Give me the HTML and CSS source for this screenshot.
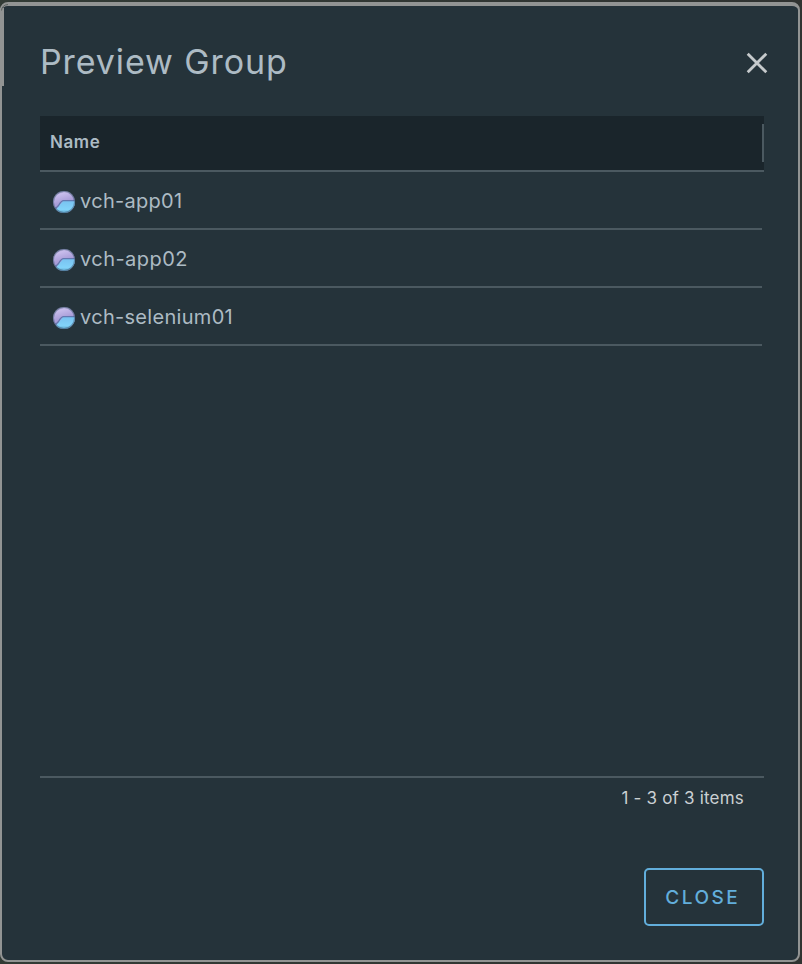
FILE: index.html
```html
<!DOCTYPE html>
<html lang="en">
<head>
<meta charset="utf-8">
<title>Preview Group</title>
<link rel="stylesheet" href="styles.css">
</head>
<body>
<svg class="defs" width="0" height="0" aria-hidden="true">
  <defs>
    <linearGradient id="top" x1="0" y1="0" x2="0.3" y2="1">
      <stop offset="0" stop-color="#8a80b5"/><stop offset=".25" stop-color="#c8bdec"/><stop offset=".6" stop-color="#a99dd8"/>
    </linearGradient>
    <linearGradient id="bottom" x1="0" y1="0" x2="0" y2="1">
      <stop offset="0" stop-color="#79c2f0"/><stop offset=".65" stop-color="#82d3fa"/><stop offset="1" stop-color="#569fc4"/>
    </linearGradient>
    <clipPath id="disc"><circle cx="12" cy="12" r="11"/></clipPath>
    <symbol id="vch" viewBox="0 0 24 24">
      <g clip-path="url(#disc)">
        <rect width="24" height="24" fill="url(#top)"/>
        <path d="M4 19.500 11 11H24V24H4Z" fill="url(#bottom)"/>
        <path d="M3.500 18.500 6.500 15.500Q9.500 10.700 11.500 10.700H24" fill="none" stroke="#6478b0" stroke-width="1.300"/>
      </g>
      <circle cx="12" cy="12" r="10.600" fill="none" stroke="#3c5670" stroke-opacity=".5" stroke-width="1.200"/>
    </symbol>
  </defs>
</svg>
<div class="modal" role="dialog" aria-labelledby="title">
  <div class="edge"></div>
  <svg class="corner" viewBox="0 0 10 10" aria-hidden="true"><path d="M1.500 8.500Q2 3 8 2.500"/></svg>
  <header class="header">
    <h1 id="title" class="title">Preview Group</h1>
    <svg class="dismiss" viewBox="0 0 22 22" role="img" aria-label="Close"><path d="M1.700 1.700 20.300 20.300M20.300 1.700 1.700 20.300"/></svg>
  </header>
  <main class="grid">
    <div class="head"><span class="name">Name</span><i class="handle"></i></div>
    <ul class="rows">
      <li class="row"><svg class="icon"><use href="#vch"/></svg><span class="app">vch-app01</span></li>
      <li class="row"><svg class="icon"><use href="#vch"/></svg><span class="app wide">vch-app02</span></li>
      <li class="row"><svg class="icon"><use href="#vch"/></svg><span class="app">vch-selenium01</span></li>
    </ul>
    <div class="count"><span class="items">1 - 3 of 3 items</span></div>
  </main>
  <footer class="footer"><button class="close"><span class="label">CLOSE</span></button></footer>
</div>
</body>
</html>
```
FILE: styles.css
```css
* { box-sizing: border-box; }
body {
  margin: 0;
  padding: 2px 2px 2px 0;
  height: 964px;
  overflow: hidden;
  background: linear-gradient(90deg, #323b35, #303331);
  font-family: Inter, "Liberation Sans", sans-serif;
  color: #adbbc4;
}
.defs { position: absolute; }
.modal {
  position: relative;
  display: flex;
  flex-direction: column;
  height: 960px;
  padding: 0 34px 34px 38px;
  border: 2px solid #929493;
  border-top-width: 4px;
  border-radius: 8px;
  background: #25333a;
}
.edge {
  position: absolute;
  left: -2px;
  top: 2px;
  width: 4px;
  height: 78px;
  background: #929493;
}
.corner {
  position: absolute;
  left: -2px;
  top: -4px;
  width: 10px;
  height: 10px;
  fill: none;
  stroke: #59605e;
}
.header {
  display: flex;
  justify-content: space-between;
  height: 110px;
  flex: none;
}
.title {
  margin: 34px 0 0;
  font-size: 34px;
  line-height: 44px;
  font-weight: 400;
  letter-spacing: .9px;
  white-space: nowrap;
}
.dismiss {
  width: 22px;
  height: 22px;
  margin: 46px -4px 0 0;
  fill: none;
  stroke: #c6cacc;
  stroke-width: 2.8;
}
.grid {
  flex: 1;
  display: flex;
  flex-direction: column;
}
.head {
  display: flex;
  justify-content: space-between;
  height: 56px;
  padding-left: 10px;
  border-bottom: 2px solid #4b5960;
  background: #1a252b;
  font-size: 17px;
  font-weight: 600;
  line-height: 52px;
}
.name { letter-spacing: .6px; }
.handle { width: 2px; height: 38px; margin-top: 8px; background: #4b5960; }
.rows {
  flex: 1;
  margin: 0 2px 0 0;
  padding: 0;
  list-style: none;
}
.row {
  display: flex;
  height: 58px;
  padding-left: 12px;
  border-bottom: 2px solid #4b5960;
  font-size: 20px;
  line-height: 58px;
}
.icon { width: 24px; height: 24px; margin: 18px 4px 0 0; }
.app { letter-spacing: .3px; }
.wide { letter-spacing: .45px; }
.count {
  height: 48px;
  padding-right: 20px;
  border-top: 2px solid #4b5960;
  text-align: right;
  font-size: 17px;
  line-height: 40px;
  color: #cbd0d3;
}
.items { letter-spacing: .2px; }
.footer {
  display: flex;
  justify-content: flex-end;
  height: 102px;
  padding-top: 44px;
}
.close {
  width: 120px;
  height: 58px;
  padding: 0 5px 0 0;
  border: 2px solid #62aedb;
  border-radius: 5px;
  background: none;
  color: #62aedb;
  font: 500 19px/54px Inter, "Liberation Sans", sans-serif;
}
.label { position: relative; top: 1px; letter-spacing: 2.5px; margin-right: -2.5px; }
```
